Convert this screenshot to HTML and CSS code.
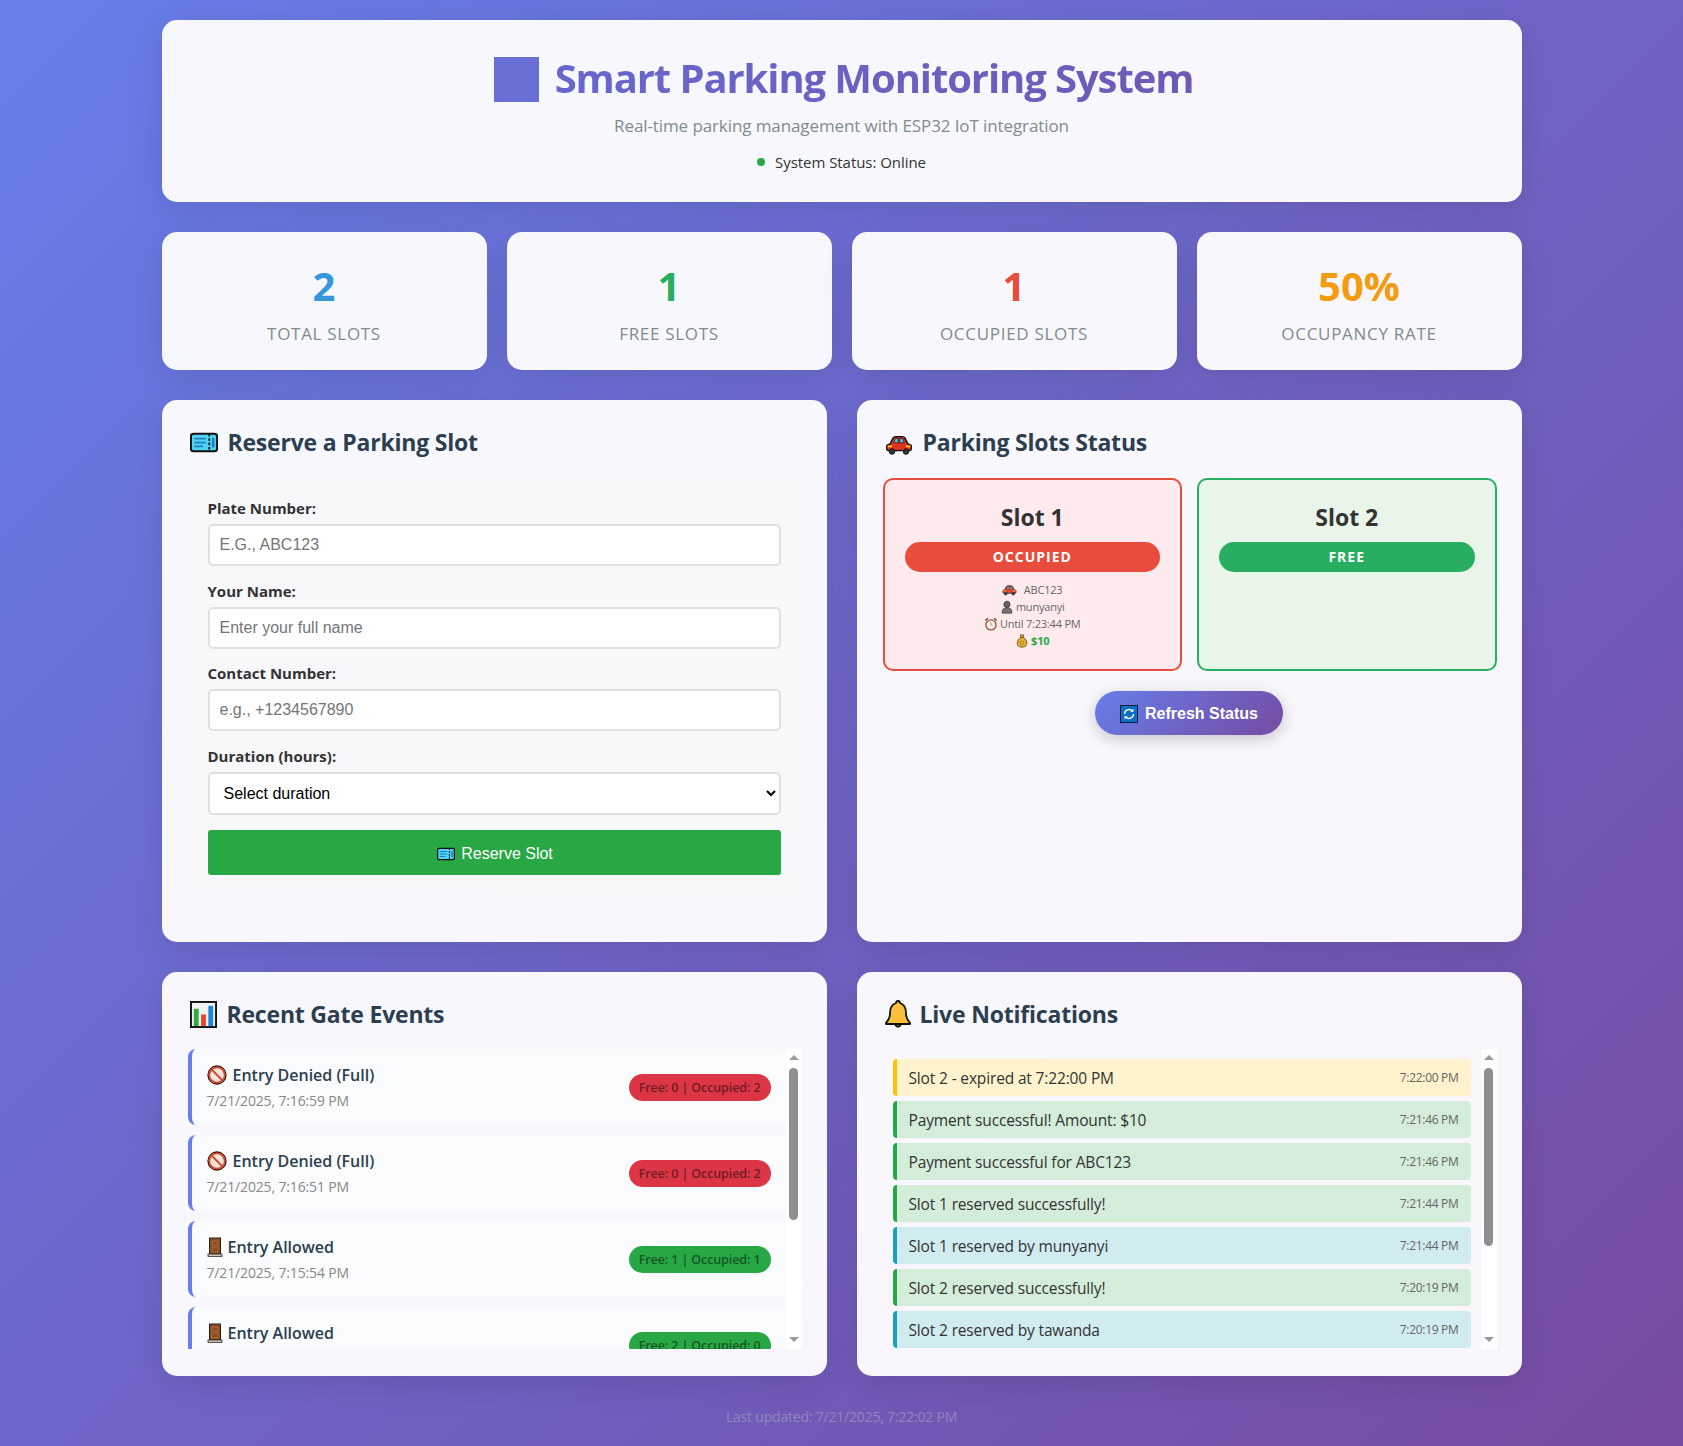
FILE: index.html
```html
<!DOCTYPE html>
<html lang="en">
<head>
    <meta charset="UTF-8">
    <meta name="viewport" content="width=device-width, initial-scale=1.0">
    <title>Smart Parking Monitoring System</title>
    <link rel="stylesheet" href="styles.css">
</head>
<body>
    <svg class="icon-sprite" width="0" height="0" aria-hidden="true">
        <symbol id="i-ticket" viewBox="0 0 32 24">
            <path d="M4 2h24a3 3 0 0 1 3 3v14a3 3 0 0 1-3 3H4a3 3 0 0 1-3-3V5a3 3 0 0 1 3-3z" fill="#4fd3f2" stroke="#111" stroke-width="2.400"/>
            <path d="M5 7.500h13M5 12h13M5 16.500h10" stroke="#1f7fc4" stroke-width="2"/>
            <path d="M22 2v20" stroke="#111" stroke-width="2" stroke-dasharray="3 2"/>
            <path d="M26.500 6.500v11" stroke="#1f7fc4" stroke-width="3"/>
        </symbol>
        <symbol id="i-car" viewBox="0 0 32 24">
            <path d="M2 17v-4l4-2 3-6q1-2 3-2h8q2 0 3 2l3 6 4 2v4q0 2-2 2H4q-2 0-2-2z" fill="#e0341f" stroke="#111" stroke-width="1.600"/>
            <path d="M10 10l2-5h3v5zM17 5h3l2 5h-5z" fill="#5cc6e8" stroke="#111" stroke-width=".8"/>
            <path d="M3 14h5M24 14h5" stroke="#ffc83d" stroke-width="2"/>
            <circle cx="8" cy="20" r="3.200" fill="#333" stroke="#111"/>
            <circle cx="24" cy="20" r="3.200" fill="#333" stroke="#111"/>
        </symbol>
        <symbol id="i-chart" viewBox="0 0 28 28">
            <rect x="1" y="1" width="26" height="26" fill="#f1f1f1" stroke="#111" stroke-width="2"/>
            <rect x="4" y="8" width="5" height="18" fill="#2fae3f"/>
            <rect x="11.500" y="14" width="5" height="12" fill="#e8452c"/>
            <rect x="19" y="5" width="5" height="21" fill="#1e88d8"/>
        </symbol>
        <symbol id="i-bell" viewBox="0 0 26 30">
            <path d="M13 2q2 0 2 2 6 2 6 10 0 6 4 10v1H1v-1q4-4 4-10 0-8 6-10 0-2 2-2z" fill="#fbbf3c" stroke="#111" stroke-width="1.800" stroke-linejoin="round"/>
            <path d="M10 25.500q3 5 6 0z" fill="#c98a1a" stroke="#111" stroke-width="1.500"/>
        </symbol>
        <symbol id="i-deny" viewBox="0 0 20 20">
            <circle cx="10" cy="10" r="9" fill="#f7e5dc" stroke="#4a1006" stroke-width="1.300"/>
            <circle cx="10" cy="10" r="7.600" fill="none" stroke="#d2462c" stroke-width="1.500"/>
            <path d="M4.500 4.500l11 11" stroke="#d2462c" stroke-width="1.800"/>
        </symbol>
        <symbol id="i-door" viewBox="0 0 16 20">
            <rect x="2.500" y="1" width="11" height="16" fill="#8a4a22" stroke="#222" stroke-width="1"/>
            <path d="M5 4h6v4H5zM5 10h6v5H5z" fill="none" stroke="#b5763f" stroke-width=".8"/>
            <rect x="1" y="17" width="14" height="2.500" fill="#c9c1b4" stroke="#333" stroke-width=".8"/>
        </symbol>
        <symbol id="i-refresh" viewBox="0 0 18 18">
            <rect x=".5" y=".5" width="17" height="17" fill="#0d6fc4" stroke="#0b1d3a"/>
            <path d="M4.500 9a4.500 4.500 0 0 1 7.800-3M13.500 9a4.500 4.500 0 0 1-7.800 3" fill="none" stroke="#fff" stroke-width="1.300"/>
            <path d="M13.500 3.500v3.200h-3.200zM4.500 14.500v-3.200h3.200z" fill="#fff"/>
        </symbol>
        <symbol id="i-person" viewBox="0 0 14 16">
            <circle cx="7" cy="5" r="3.600" fill="#555" stroke="#222" stroke-width=".8"/>
            <path d="M1.500 15v-2.500Q2 9.500 5 9h4q3 .5 3.500 3.500V15z" fill="#666" stroke="#222" stroke-width=".8"/>
        </symbol>
        <symbol id="i-clock" viewBox="0 0 16 16">
            <circle cx="8" cy="9" r="5.800" fill="#f6efe2" stroke="#9c3d2a" stroke-width="1.500"/>
            <path d="M1.500 4l3-2.500M14.500 4l-3-2.500" stroke="#333" stroke-width="1.500"/>
            <path d="M8 6v3l2 1" fill="none" stroke="#777" stroke-width=".8"/>
        </symbol>
        <symbol id="i-money" viewBox="0 0 14 16">
            <path d="M5 1h4L8.500 4q4 2 4 6.500 0 4.500-5.500 4.500T1.500 10.500Q1.500 6 5.500 4z" fill="#e9ae17" stroke="#4a3a10" stroke-width=".9"/>
            <path d="M5 4h4" stroke="#4a3a10"/>
            <circle cx="7" cy="10" r="2.200" fill="none" stroke="#8a6a10" stroke-width=".8"/>
        </symbol>
    </svg>

    <div class="container">
        <header class="header">
            <h1><span class="h1-square"></span><span class="h1-text">Smart Parking Monitoring System</span></h1>
            <p class="subtitle">Real-time parking management with ESP32 IoT integration</p>
            <div class="system-status"><span class="status-dot"></span>System Status: Online</div>
        </header>

        <section class="stats">
            <div class="stat-card"><div class="stat-number total">2</div><div class="stat-label">Total Slots</div></div>
            <div class="stat-card"><div class="stat-number free">1</div><div class="stat-label">Free Slots</div></div>
            <div class="stat-card"><div class="stat-number occupied">1</div><div class="stat-label">Occupied Slots</div></div>
            <div class="stat-card"><div class="stat-number rate">50%</div><div class="stat-label">Occupancy Rate</div></div>
        </section>

        <section class="grid">
            <div class="panel">
                <h2><svg class="h2-icon ticket"><use href="#i-ticket"/></svg>Reserve a Parking Slot</h2>
                <form class="reserve-form">
                    <div class="form-group">
                        <label for="plate">Plate Number:</label>
                        <input type="text" id="plate" placeholder="E.G., ABC123">
                    </div>
                    <div class="form-group">
                        <label for="name">Your Name:</label>
                        <input type="text" id="name" placeholder="Enter your full name">
                    </div>
                    <div class="form-group">
                        <label for="contact">Contact Number:</label>
                        <input type="text" id="contact" placeholder="e.g., +1234567890">
                    </div>
                    <div class="form-group">
                        <label for="duration">Duration (hours):</label>
                        <select id="duration">
                            <option>Select duration</option>
                        </select>
                    </div>
                    <button type="button" class="reserve-btn"><svg class="btn-ticket"><use href="#i-ticket"/></svg>Reserve Slot</button>
                </form>
            </div>

            <div class="panel">
                <h2><svg class="h2-icon car"><use href="#i-car"/></svg>Parking Slots Status</h2>
                <div class="slots">
                    <div class="slot slot-occupied">
                        <div class="slot-title">Slot 1</div>
                        <div class="slot-badge badge-occupied">Occupied</div>
                        <div class="slot-details">
                            <div><svg class="mini car-mini"><use href="#i-car"/></svg> ABC123</div>
                            <div><svg class="mini"><use href="#i-person"/></svg>munyanyi</div>
                            <div><svg class="mini"><use href="#i-clock"/></svg>Until 7:23:44 PM</div>
                            <div class="slot-paid"><svg class="mini"><use href="#i-money"/></svg>$10</div>
                        </div>
                    </div>
                    <div class="slot slot-free">
                        <div class="slot-title">Slot 2</div>
                        <div class="slot-badge badge-free">Free</div>
                    </div>
                </div>
                <div class="refresh-row">
                    <button type="button" class="refresh-btn"><svg class="refresh-icon"><use href="#i-refresh"/></svg>Refresh Status</button>
                </div>
            </div>

            <div class="panel">
                <h2><svg class="h2-icon chart"><use href="#i-chart"/></svg>Recent Gate Events</h2>
                <div class="scroll-wrap">
                    <div class="scroll-list event-list">
                        <div class="event">
                            <div>
                                <div class="event-title"><svg class="event-icon"><use href="#i-deny"/></svg>Entry Denied (Full)</div>
                                <div class="event-time">7/21/2025, 7:16:59 PM</div>
                            </div>
                            <span class="event-pill pill-red">Free: 0 | Occupied: 2</span>
                        </div>
                        <div class="event">
                            <div>
                                <div class="event-title"><svg class="event-icon"><use href="#i-deny"/></svg>Entry Denied (Full)</div>
                                <div class="event-time">7/21/2025, 7:16:51 PM</div>
                            </div>
                            <span class="event-pill pill-red">Free: 0 | Occupied: 2</span>
                        </div>
                        <div class="event">
                            <div>
                                <div class="event-title"><svg class="event-icon door"><use href="#i-door"/></svg>Entry Allowed</div>
                                <div class="event-time">7/21/2025, 7:15:54 PM</div>
                            </div>
                            <span class="event-pill pill-green">Free: 1 | Occupied: 1</span>
                        </div>
                        <div class="event">
                            <div>
                                <div class="event-title"><svg class="event-icon door"><use href="#i-door"/></svg>Entry Allowed</div>
                                <div class="event-time">&nbsp;</div>
                            </div>
                            <span class="event-pill pill-green">Free: 2 | Occupied: 0</span>
                        </div>
                    </div>
                    <div class="scrollbar">
                        <span class="sb-up"></span>
                        <span class="sb-thumb thumb-events"></span>
                        <span class="sb-down"></span>
                    </div>
                </div>
            </div>

            <div class="panel">
                <h2><svg class="h2-icon bell"><use href="#i-bell"/></svg>Live Notifications</h2>
                <div class="scroll-wrap">
                    <div class="scroll-list notif-list">
                        <div class="notif warn"><span>Slot 2 - expired at 7:22:00 PM</span><span class="notif-time">7:22:00 PM</span></div>
                        <div class="notif ok"><span>Payment successful! Amount: $10</span><span class="notif-time">7:21:46 PM</span></div>
                        <div class="notif ok"><span>Payment successful for ABC123</span><span class="notif-time">7:21:46 PM</span></div>
                        <div class="notif ok"><span>Slot 1 reserved successfully!</span><span class="notif-time">7:21:44 PM</span></div>
                        <div class="notif info"><span>Slot 1 reserved by munyanyi</span><span class="notif-time">7:21:44 PM</span></div>
                        <div class="notif ok"><span>Slot 2 reserved successfully!</span><span class="notif-time">7:20:19 PM</span></div>
                        <div class="notif info"><span>Slot 2 reserved by tawanda</span><span class="notif-time">7:20:19 PM</span></div>
                    </div>
                    <div class="scrollbar">
                        <span class="sb-up"></span>
                        <span class="sb-thumb thumb-notifs"></span>
                        <span class="sb-down"></span>
                    </div>
                </div>
            </div>
        </section>

        <footer class="last-updated">Last updated: 7/21/2025, 7:22:02 PM</footer>
    </div>
</body>
</html>
```

FILE: styles.css
```css
* {
    box-sizing: border-box;
    margin: 0;
    padding: 0;
}

body {
    font-family: "Open Sans", "Noto Sans", sans-serif;
    background: linear-gradient(135deg, #667eea 0%, #764ba2 100%);
    min-height: 100vh;
    color: #333;
}

.icon-sprite {
    position: absolute;
}

.container {
    width: 1360px;
    margin: 0 auto;
    padding: 20px 0 18px;
}

.header {
    height: 182px;
    background: rgba(255, 255, 255, 0.95);
    border-radius: 15px;
    box-shadow: 0 8px 32px rgba(0, 0, 0, 0.1);
    padding-top: 37px;
    text-align: center;
    margin-bottom: 30px;
}

h1 {
    display: flex;
    justify-content: center;
    align-items: center;
    gap: 16px;
    height: 45px;
    padding-left: 4px;
    font-size: 40px;
    font-weight: 700;
    letter-spacing: -1.1px;
    margin-bottom: 12px;
}

.h1-square {
    width: 45px;
    height: 45px;
    background: #6a6fd6;
}

.h1-text {
    background: linear-gradient(90deg, #6867cd 0%, #6d5ab5 100%);
    background-clip: text;
    -webkit-background-clip: text;
    color: transparent;
    line-height: 54px;
    margin-top: -4px;
}

.subtitle {
    font-size: 17px;
    line-height: 24px;
    color: #7f8c8d;
    letter-spacing: -0.1px;
    margin-bottom: 12px;
}

.system-status {
    display: flex;
    justify-content: center;
    align-items: center;
    font-size: 15px;
    line-height: 24px;
    letter-spacing: -0.05px;
}

.status-dot {
    width: 8px;
    height: 8px;
    border-radius: 50%;
    background: #28a745;
    margin-right: 10px;
}

.stats {
    display: grid;
    grid-template-columns: repeat(4, 1fr);
    gap: 20px;
    margin-bottom: 30px;
}

.stat-card {
    height: 138px;
    background: rgba(255, 255, 255, 0.95);
    border-radius: 15px;
    box-shadow: 0 8px 32px rgba(0, 0, 0, 0.1);
    padding-top: 25px;
    text-align: center;
}

.stat-number {
    font-size: 40px;
    font-weight: 700;
    line-height: 58px;
    margin-bottom: 7px;
}

.total { color: #3498db; }
.free { color: #27ae60; }
.occupied { color: #e74c3c; }
.rate { color: #f39c12; }

.stat-label {
    font-size: 17px;
    line-height: 24px;
    color: #7f8c8d;
    text-transform: uppercase;
    letter-spacing: 0.7px;
}

.grid {
    display: grid;
    grid-template-columns: 1fr 1fr;
    grid-template-rows: 542px 404px;
    gap: 30px;
}

.panel {
    background: rgba(255, 255, 255, 0.95);
    border-radius: 15px;
    box-shadow: 0 8px 32px rgba(0, 0, 0, 0.1);
    padding: 25px;
}

h2 {
    display: flex;
    align-items: center;
    height: 34px;
    font-size: 23px;
    font-weight: 700;
    color: #2c3e50;
    letter-spacing: -0.2px;
    margin-bottom: 19px;
}

.h2-icon {
    margin-right: 10px;
    flex: none;
}

.h2-icon.ticket { width: 28px; height: 21px; margin-left: 3px; }
.h2-icon.car { width: 28px; height: 21px; margin-left: 3px; margin-top: 4px; }
.h2-icon.chart { width: 27px; height: 27px; margin-left: 3px; }
.h2-icon.bell { width: 26px; height: 30px; margin-left: 3px; margin-right: 9px; }

.reserve-form {
    padding: 20px 21px;
    background: rgba(248, 249, 250, 0.6);
    border-radius: 10px;
}

.form-group {
    margin-bottom: 14.700px;
}

label {
    display: block;
    font-size: 15px;
    font-weight: 700;
    line-height: 21px;
    margin-bottom: 5px;
    color: #333;
}

input, select {
    display: block;
    width: 100%;
    border: 2px solid #e0e0e0;
    border-radius: 5px;
    background: #fff;
    font-family: "Liberation Sans", sans-serif;
    font-size: 16px;
    padding: 0 10px;
    height: 42px;
    color: #000;
}

select {
    height: 43px;
}

input::placeholder {
    color: #757575;
}

.reserve-btn {
    display: flex;
    justify-content: center;
    align-items: center;
    width: 100%;
    height: 45px;
    padding: 3px 0 0 2px;
    background: #28a745;
    color: #fff;
    border: none;
    border-radius: 3px;
    font-family: "Liberation Sans", sans-serif;
    font-size: 16px;
}

.btn-ticket {
    width: 18px;
    height: 14px;
    margin-right: 6px;
}

.slots {
    display: grid;
    grid-template-columns: 1fr 1fr;
    gap: 15px;
    padding-left: 1px;
}

.slot {
    height: 193px;
    border: 2px solid;
    border-radius: 10px;
    padding: 20px;
    text-align: center;
}

.slot-occupied {
    background: #ffebee;
    border-color: #e74c3c;
}

.slot-free {
    background: #e8f5e8;
    border-color: #27ae60;
}

.slot-title {
    font-size: 23px;
    font-weight: 700;
    line-height: 34px;
    margin-bottom: 8px;
}

.slot-badge {
    height: 30px;
    line-height: 30px;
    border-radius: 15px;
    color: #fff;
    font-size: 14px;
    font-weight: 700;
    letter-spacing: 1px;
    text-transform: uppercase;
}

.badge-occupied { background: #e74c3c; }
.badge-free { background: #27ae60; }

.slot-details {
    margin-top: 9px;
    font-size: 11px;
    line-height: 17px;
    color: #666;
    letter-spacing: -0.2px;
}

.mini {
    width: 14px;
    height: 14px;
    vertical-align: -3px;
    margin-right: 2px;
    opacity: 0.9;
}

.car-mini {
    width: 15px;
    margin-right: 4px;
}

.slot-paid {
    color: #28a745;
    font-weight: 700;
}

.refresh-row {
    display: flex;
    justify-content: center;
    margin-top: 20px;
}

.refresh-btn {
    display: flex;
    align-items: center;
    justify-content: center;
    width: 188px;
    height: 44px;
    padding-top: 2px;
    border: none;
    border-radius: 25px;
    background: linear-gradient(135deg, #667eea 0%, #764ba2 100%);
    box-shadow: 0 4px 15px rgba(0, 0, 0, 0.2);
    color: #fff;
    font-family: "Liberation Sans", sans-serif;
    font-size: 16px;
    font-weight: 700;
}

.refresh-icon {
    width: 18px;
    height: 18px;
    margin-right: 7px;
}

.scroll-wrap {
    display: flex;
    height: 300px;
    margin-top: -1px;
}

.scroll-list {
    flex: 1;
    min-width: 0;
    overflow: hidden;
}

/* scrollbars don't show in the headless run, so it's drawn */
.scrollbar {
    display: flex;
    flex-direction: column;
    align-items: center;
    flex: none;
    width: 16px;
    padding: 6px 0 7px;
    background: #fff;
}

.sb-up, .sb-down {
    width: 0;
    height: 0;
    border-left: 5px solid transparent;
    border-right: 5px solid transparent;
}

.sb-up {
    border-bottom: 5px solid #9a9a9a;
}

.sb-down {
    border-top: 5px solid #9a9a9a;
    margin-top: auto;
}

.sb-thumb {
    width: 9px;
    margin-top: 8px;
    background: #8f8f8f;
    border-radius: 5px;
}

.thumb-events { height: 152px; }
.thumb-notifs { height: 178px; }

.event-list {
    padding-left: 1px;
}

.event {
    display: flex;
    justify-content: space-between;
    align-items: center;
    height: 76px;
    padding: 0 15px;
    margin-bottom: 10px;
    background: #fafbfc;
    border-left: 4px solid #667eea;
    border-radius: 8px;
}

.event-title {
    display: flex;
    align-items: center;
    font-size: 16px;
    font-weight: 600;
    line-height: 22px;
    color: #2c3e50;
    margin-bottom: 5px;
}

.event-icon {
    width: 20px;
    height: 20px;
    margin-right: 6px;
}

.event-icon.door {
    width: 16px;
    margin-right: 5px;
}

.event-time {
    font-size: 14px;
    line-height: 20px;
    color: #888;
    letter-spacing: -0.15px;
}

.event-pill {
    height: 27px;
    line-height: 27px;
    padding: 0 10px;
    border-radius: 14px;
    font-size: 12.500px;
    font-weight: 600;
    letter-spacing: -0.1px;
}

.pill-red {
    background: #dc3545;
    color: #721c24;
}

.pill-green {
    background: #28a745;
    color: #155724;
}

.notif-list {
    padding: 10px 10px 0 11px;
}

.notif {
    display: flex;
    justify-content: space-between;
    align-items: center;
    height: 37px;
    padding: 0 12px;
    margin-bottom: 5px;
    border-left: 4px solid;
    border-radius: 4px;
    font-size: 15.500px;
    letter-spacing: -0.15px;
}

.warn { background: #fff3cd; border-color: #ffc107; }
.ok { background: #d4edda; border-color: #28a745; }
.info { background: #d1ecf1; border-color: #17a2b8; }

.notif-time {
    font-size: 12px;
    color: #666;
    letter-spacing: -0.3px;
}

.last-updated {
    margin-top: 30px;
    text-align: center;
    font-size: 14px;
    line-height: 22px;
    color: #8f86bd;
    letter-spacing: -0.2px;
}
```
